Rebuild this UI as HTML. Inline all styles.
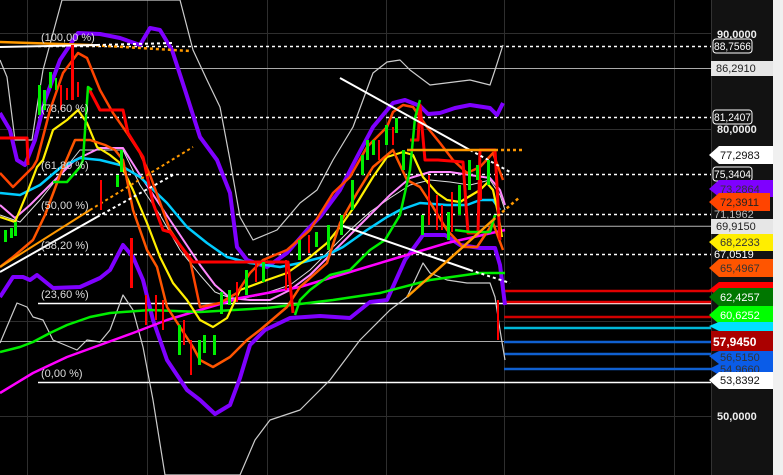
<!DOCTYPE html>
<html><head><meta charset="utf-8"><style>
html,body{margin:0;padding:0;background:#000;width:783px;height:475px;overflow:hidden}
svg{display:block}
text{font-family:"Liberation Sans",sans-serif}
</style></head><body>
<svg width="783" height="475" viewBox="0 0 783 475" xmlns="http://www.w3.org/2000/svg">
<rect width="783" height="475" fill="#000"/>
<g stroke="#2e2e2e" stroke-width="1">
<line x1="27.5" y1="0" x2="27.5" y2="475"/><line x1="147.5" y1="0" x2="147.5" y2="475"/>
<line x1="267.5" y1="0" x2="267.5" y2="475"/><line x1="386.5" y1="0" x2="386.5" y2="475"/>
<line x1="504.5" y1="0" x2="504.5" y2="475"/><line x1="674.5" y1="0" x2="674.5" y2="475"/>
<line x1="0" y1="33.5" x2="711" y2="33.5"/><line x1="0" y1="129.5" x2="711" y2="129.5"/>
<line x1="0" y1="225.5" x2="711" y2="225.5"/><line x1="0" y1="321.5" x2="711" y2="321.5"/>
<line x1="0" y1="416.5" x2="711" y2="416.5"/>
</g>
<line x1="0" y1="68.5" x2="711" y2="68.5" stroke="#aaa"/>
<line x1="0" y1="226.5" x2="711" y2="226.5" stroke="#888"/>
<line x1="0" y1="341.5" x2="504" y2="341.5" stroke="#aaa"/>
<g stroke="#fff" stroke-width="1.5" stroke-dasharray="3,3">
<line x1="38" y1="46.5" x2="711" y2="46.5"/><line x1="38" y1="117.5" x2="711" y2="117.5"/>
<line x1="38" y1="174.5" x2="711" y2="174.5"/><line x1="38" y1="214.5" x2="711" y2="214.5"/>
<line x1="38" y1="254.5" x2="711" y2="254.5"/>
</g>
<line x1="38" y1="303.5" x2="711" y2="303.5" stroke="#fff" stroke-width="1.5"/>
<line x1="38" y1="382.5" x2="711" y2="382.5" stroke="#fff" stroke-width="1.5"/>
<g stroke-width="2.5">
<line x1="504" y1="291" x2="711" y2="291" stroke="#e00000"/>
<line x1="504" y1="302" x2="711" y2="302" stroke="#e00000"/>
<line x1="504" y1="317" x2="711" y2="317" stroke="#d00000"/>
<line x1="504" y1="328" x2="711" y2="328" stroke="#00b8d8"/>
<line x1="504" y1="342" x2="711" y2="342" stroke="#1060d0"/>
<line x1="504" y1="354" x2="711" y2="354" stroke="#1060d0"/>
<line x1="504" y1="369" x2="711" y2="369" stroke="#1060d0"/>
</g>
<g fill="none" stroke-linejoin="round">
<polyline stroke="#ccc" stroke-width="1.2" points="0,60 7,77 15,140 20,140 32,140 37,107 43,70 62,0 180,0 193,50 207,80 220,107 230,160 240,217 253,240 277,230 300,203 317,190 333,160 353,127 373,73 387,62 400,60 410,70 430,85 470,80 490,85 495,70 503,45"/>
<polyline stroke="#ccc" stroke-width="1.2" points="0,343 17,303 27,307 33,317 43,320 53,340 77,350 87,340 100,342 110,330 123,295 133,310 143,347 153,400 165,475 240,475 255,440 270,420 300,410 330,380 360,340 390,310 407,297 423,263 430,273 447,280 467,283 490,283 495,297 500,330 505,360"/>
<polyline stroke="#7f00ff" stroke-width="4" points="0,113 10,130 17,160 25,165 35,140 45,100 60,60 78,33 100,34 120,38 140,45 150,28 160,30 172,50 185,90 200,137 217,160 230,193 237,247 247,260 267,267 287,253 307,230 320,217 340,190 357,157 373,127 393,103 405,100 420,106 428,114 440,113 455,108 470,105 490,108 497,115 503,103"/>
<polyline stroke="#7f00ff" stroke-width="4" points="0,297 13,277 23,277 30,280 37,275 53,288 80,287 100,278 110,270 123,245 133,257 143,280 153,320 167,360 187,390 200,400 215,414 230,405 240,378 250,345 265,330 290,318 320,316 350,318 370,302 387,300 405,260 423,235 445,235 460,245 480,248 495,248 500,265 505,305"/>
<polyline stroke="#ddd" stroke-width="1" points="0,215 20,222 40,200 60,175 80,150 100,150 123,150 140,185 160,215 180,250 200,275 215,292 235,300 260,295 290,285 310,270 330,250 350,230 370,212 390,198 410,185 430,180 450,182 470,185 490,180 500,195 505,210"/>
<polyline stroke="#ff88ff" stroke-width="2" points="0,205 15,218 30,205 50,185 75,160 100,148 123,148 140,175 160,205 180,235 200,265 215,285 230,298 250,300 270,300 290,290 310,275 330,255 350,235 370,215 390,195 410,178 430,172 450,172 470,175 490,178 500,190 505,205"/>
<polyline stroke="#00ccff" stroke-width="2.5" points="0,193 20,195 40,185 60,168 80,158 100,160 120,165 140,177 167,203 187,227 207,243 227,257 250,263 280,267 300,263 323,257 343,247 367,230 387,217 400,210 420,203 447,205 467,205 480,200 493,200 500,210"/>
<polyline stroke="#ff00ff" stroke-width="2.5" points="0,393 33,373 67,357 100,345 133,333 167,320 200,310 240,298 300,287 350,272 400,257 447,243 505,230"/>
<polyline stroke="#00ee00" stroke-width="2.5" points="0,352 20,347 33,342 50,333 67,325 90,317 110,313 150,310 200,312 267,308 333,300 380,293 430,280 480,273 505,273"/>
<polyline stroke="#ffee00" stroke-width="2.2" points="0,217 15,222 27,193 37,167 43,160 53,130 67,120 78,110 87,123 97,147 110,155 120,163 133,190 147,223 160,257 173,283 187,300 200,320 213,327 227,318 240,290 267,280 287,273 310,257 327,243 340,227 357,203 373,177 387,157 403,152 413,155 423,177 437,193 447,200 460,202 480,190 487,183 493,190 498,213 502,237"/>
<polyline stroke="#ff5500" stroke-width="2.5" points="0,267 13,257 33,240 45,215 60,175 75,140 90,140 105,145 115,150 123,160 133,210 147,250 157,267 167,307 180,327 193,347 200,360 213,367 230,357 247,340 260,330 287,307 300,287 327,263 340,223 357,193 373,167 393,150 407,180 420,187 433,207 447,230 463,247 477,247 493,223 503,250"/>
<polyline stroke="#ff4400" stroke-width="2.5" points="0,173 13,187 33,167 37,160 50,110 63,73 78,53 87,58 100,90 113,113 127,133 140,153 150,175 170,230 190,260 200,307 220,303 237,293 250,273 263,260 287,250 310,230 333,193 350,177 367,147 387,127 393,112 403,105 413,107 427,127 440,143 453,160 467,173 480,167 493,153 503,180"/>
<polyline stroke="#ff0000" stroke-width="3" points="0,138 27,138 28,165"/>
<polyline stroke="#ff0000" stroke-width="3" points="88,87 100,110 123,110 128,133 143,157 153,203 163,230 170,232 193,262 288,262 293,313"/>
<polyline stroke="#ff0000" stroke-width="3" points="410,140 418,140 420,105 425,160 438,160 463,162 468,233 478,233 480,150 495,150 500,240"/>
<polyline stroke="#00ee00" stroke-width="2.5" points="53,182 67,182 80,167 83,160 88,87 92,90"/>
<polyline stroke="#00ee00" stroke-width="2.5" points="295,315 300,300 310,290 330,275 350,270 370,250 385,240 400,215 410,170 415,118 420,100"/>
<polyline stroke="#00ee00" stroke-width="2.5" points="455,230 470,232 490,232 495,215"/>
</g>
<g fill="none">
<line x1="0" y1="42" x2="90" y2="45" stroke="#ff9900" stroke-width="2.5"/>
<line x1="90" y1="45" x2="190" y2="51" stroke="#ff9900" stroke-width="2.5" stroke-dasharray="3,3"/>
<line x1="0" y1="47" x2="97" y2="45" stroke="#fff" stroke-width="2"/>
<line x1="97" y1="45" x2="173" y2="43" stroke="#fff" stroke-width="2" stroke-dasharray="3,3"/>
<line x1="0" y1="267" x2="90" y2="210" stroke="#ff9900" stroke-width="2"/>
<line x1="90" y1="210" x2="193" y2="147" stroke="#ff9900" stroke-width="2" stroke-dasharray="3,3"/>
<line x1="0" y1="272" x2="97" y2="217" stroke="#fff" stroke-width="2"/>
<line x1="97" y1="217" x2="173" y2="175" stroke="#fff" stroke-width="2" stroke-dasharray="3,3"/>
<line x1="340" y1="78" x2="470" y2="150" stroke="#fff" stroke-width="2"/>
<line x1="470" y1="150" x2="510" y2="172" stroke="#fff" stroke-width="2" stroke-dasharray="3,3"/>
<line x1="340" y1="225" x2="470" y2="270" stroke="#fff" stroke-width="2"/>
<line x1="470" y1="270" x2="510" y2="283" stroke="#fff" stroke-width="2" stroke-dasharray="3,3"/>
<line x1="407" y1="297" x2="493" y2="220" stroke="#ff9900" stroke-width="2.5"/>
<line x1="493" y1="220" x2="520" y2="197" stroke="#ff9900" stroke-width="2.5" stroke-dasharray="3,3"/>
<line x1="407" y1="150" x2="495" y2="150" stroke="#ff9900" stroke-width="2.5"/>
<line x1="495" y1="150" x2="522" y2="150" stroke="#ff9900" stroke-width="2.5" stroke-dasharray="3,3"/>
</g>
<g>
<g fill="#00ee00">
<rect x="4" y="230" width="3" height="12"/><rect x="10" y="228" width="3" height="10"/><rect x="14" y="222" width="3" height="14"/>
<rect x="38" y="85" width="3" height="30"/><rect x="43" y="90" width="3" height="20"/><rect x="49" y="72" width="3" height="16"/>
<rect x="55" y="78" width="2" height="12"/><rect x="120" y="150" width="3" height="22"/><rect x="116" y="175" width="3" height="12"/>
<rect x="178" y="325" width="3" height="30"/><rect x="198" y="340" width="3" height="25"/><rect x="203" y="335" width="3" height="18"/>
<rect x="213" y="335" width="3" height="20"/><rect x="220" y="292" width="3" height="22"/><rect x="228" y="290" width="3" height="15"/>
<rect x="245" y="270" width="3" height="25"/><rect x="262" y="262" width="3" height="20"/><rect x="298" y="240" width="3" height="20"/>
<rect x="315" y="232" width="3" height="15"/><rect x="327" y="225" width="3" height="25"/><rect x="340" y="215" width="3" height="20"/>
<rect x="351" y="180" width="3" height="30"/><rect x="361" y="155" width="3" height="20"/><rect x="366" y="140" width="3" height="20"/>
<rect x="372" y="140" width="3" height="15"/><rect x="385" y="125" width="3" height="20"/><rect x="395" y="118" width="3" height="15"/>
<rect x="402" y="150" width="3" height="20"/><rect x="421" y="215" width="3" height="20"/><rect x="447" y="212" width="3" height="28"/>
<rect x="458" y="185" width="3" height="30"/><rect x="468" y="160" width="3" height="30"/><rect x="476" y="165" width="3" height="15"/>
<rect x="487" y="160" width="3" height="25"/>
</g>
<g fill="#ff0000">
<rect x="60" y="85" width="2" height="25"/><rect x="66" y="88" width="2" height="12"/><rect x="71" y="45" width="3" height="55"/>
<rect x="77" y="82" width="2" height="15"/><rect x="100" y="180" width="2" height="30"/><rect x="130" y="238" width="3" height="50"/>
<rect x="145" y="295" width="2" height="30"/><rect x="155" y="295" width="2" height="25"/><rect x="162" y="300" width="2" height="30"/>
<rect x="183" y="320" width="2" height="25"/><rect x="190" y="340" width="2" height="35"/><rect x="236" y="282" width="2" height="20"/>
<rect x="255" y="262" width="2" height="20"/><rect x="285" y="260" width="2" height="30"/><rect x="308" y="235" width="2" height="18"/>
<rect x="378" y="140" width="2" height="20"/><rect x="392" y="127" width="2" height="18"/><rect x="428" y="175" width="2" height="50"/>
<rect x="436" y="195" width="2" height="35"/><rect x="441" y="205" width="2" height="25"/><rect x="451" y="192" width="2" height="40"/>
<rect x="480" y="180" width="2" height="20"/><rect x="497" y="300" width="2" height="40"/>
</g>
</g>
<g fill="#ddd" font-size="11">
<text x="41" y="41">(100,00 %)</text><text x="41" y="112">(78,60 %)</text>
<text x="41" y="169">(61,80 %)</text><text x="41" y="209">(50,00 %)</text>
<text x="41" y="249">(38,20 %)</text><text x="41" y="298">(23,60 %)</text>
<text x="41" y="377">(0,00 %)</text>
</g>
<rect x="711" y="0" width="62" height="475" fill="#121212"/>
<rect x="773" y="0" width="10" height="475" fill="#f0f0f0"/>
<line x1="711.5" y1="0" x2="711.5" y2="475" stroke="#333"/>
<g font-size="11" font-weight="bold" fill="#eee">
<text x="717" y="38">90,0000</text><text x="717" y="133">80,0000</text><text x="717" y="420">50,0000</text>
</g>
<g font-size="11">
<rect x="713" y="39" width="39" height="14" rx="3" fill="#111" stroke="#fff"/><text x="714" y="50" fill="#fff" textLength="37" lengthAdjust="spacingAndGlyphs">88,7566</text>
<rect x="711" y="61" width="62" height="15" fill="#e6e6e6"/><text x="716" y="72" fill="#222">86,2910</text>
<rect x="713" y="110" width="39" height="14" rx="3" fill="#111" stroke="#fff"/><text x="714" y="121" fill="#fff" textLength="37" lengthAdjust="spacingAndGlyphs">81,2407</text>
<polygon points="709,155 719,146 773,146 773,164 719,164" fill="#fff"/><text x="720" y="159" fill="#111">77,2983</text>
<rect x="713" y="167" width="39" height="14" rx="3" fill="#111" stroke="#fff"/><text x="714" y="178" fill="#fff" textLength="37" lengthAdjust="spacingAndGlyphs">75,3404</text>
<polygon points="709,189 719,180 773,180 773,197 719,197" fill="#7f00ff"/><text x="720" y="193" fill="#333">73,2864</text>
<polygon points="709,202 719,193 770,193 770,211 719,211" fill="#ff4400"/><text x="720" y="206" fill="#222">72,3911</text>
<text x="714" y="218" fill="#bbb">71,1962</text>
<rect x="711" y="219" width="62" height="15" fill="#e6e6e6"/><text x="716" y="230" fill="#222">69,9150</text>
<polygon points="709,242 719,234 773,234 773,251 719,251" fill="#ffee00"/><text x="720" y="246" fill="#333">68,2233</text>
<text x="714" y="258" fill="#fff">67,0519</text>
<polygon points="709,268 719,259 773,259 773,277 719,277" fill="#ff5500"/><text x="720" y="272" fill="#333">65,4967</text>
<polygon points="709,290 719,282 773,282 773,296 719,296" fill="#ff0000"/>
<polygon points="709,297 719,288 773,288 773,306 719,306" fill="#007700"/><text x="720" y="301" fill="#fff">62,4257</text>
<polygon points="709,315 719,306 773,306 773,324 719,324" fill="#00ff00"/><text x="720" y="319" fill="#fff">60,6252</text>
<polygon points="709,326 719,322 773,322 773,331 719,331" fill="#00e0ff"/>
<rect x="711" y="331" width="62" height="20" fill="#aa0000"/><text x="713" y="346" fill="#fff" font-weight="bold" font-size="12">57,9450</text>
<polygon points="709,356 719,351 773,351 773,364 719,364" fill="#0a5ce8"/><text x="720" y="361" fill="#333">56,5150</text>
<polygon points="709,369 719,364 773,364 773,375 719,375" fill="#0a5ce8"/><text x="720" y="373" fill="#333">54,9660</text>
<polygon points="709,380 719,372 773,372 773,389 719,389" fill="#fff"/><text x="720" y="384" fill="#111">53,8392</text>
</g>
</svg>
</body></html>
